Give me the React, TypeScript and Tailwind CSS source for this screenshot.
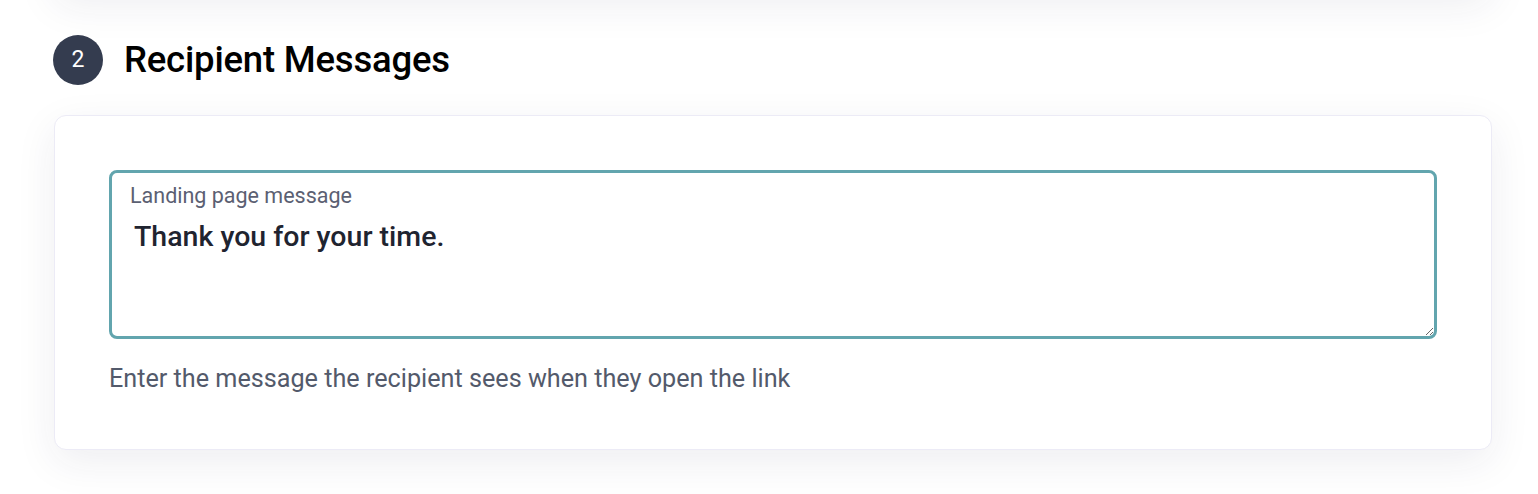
import React from 'react';

const App: React.FC = () => {
  return (
    <div className="min-h-screen bg-white overflow-hidden font-['Roboto',sans-serif]">
      <div className="px-[54px] pr-[46px]">
        {/* previous section card, off the top of the view */}
        <div className="-mt-[225px] h-[220px] rounded-xl bg-white shadow-[0_10px_40px_rgba(40,40,80,0.08)]" />

        <div className="mt-[40px] flex items-center gap-[21px]">
          <div className="-ml-px w-[50px] h-[50px] rounded-full bg-[#343c4f] flex items-center justify-center text-white text-[23px]">
            2
          </div>
          <h2 className="text-[36.5px] font-medium text-black leading-none tracking-[-0.2px]">Recipient Messages</h2>
        </div>

        <div className="mt-[30px] bg-white border border-[#ecebf6] rounded-xl shadow-[0_12px_40px_rgba(40,40,80,0.08)] px-[54px] pt-[54px] pb-[58px]">
          <div className="relative">
            <label className="absolute left-[21px] top-[15px] text-[21.5px] text-[#5b6072] leading-none">Landing page message</label>
            <textarea
              className="block w-full h-[169px] border-[3px] border-[#62a5ae] rounded-lg pt-[46px] px-[22px] text-[28.5px] font-medium text-[#1f2430] outline-none resize-y leading-tight"
              defaultValue="Thank you for your time."
            />
          </div>
          <p className="mt-[27px] text-[25.2px] text-[#535a6b] leading-none">Enter the message the recipient sees when they open the link</p>
        </div>
      </div>
    </div>
  );
};

export default App;
